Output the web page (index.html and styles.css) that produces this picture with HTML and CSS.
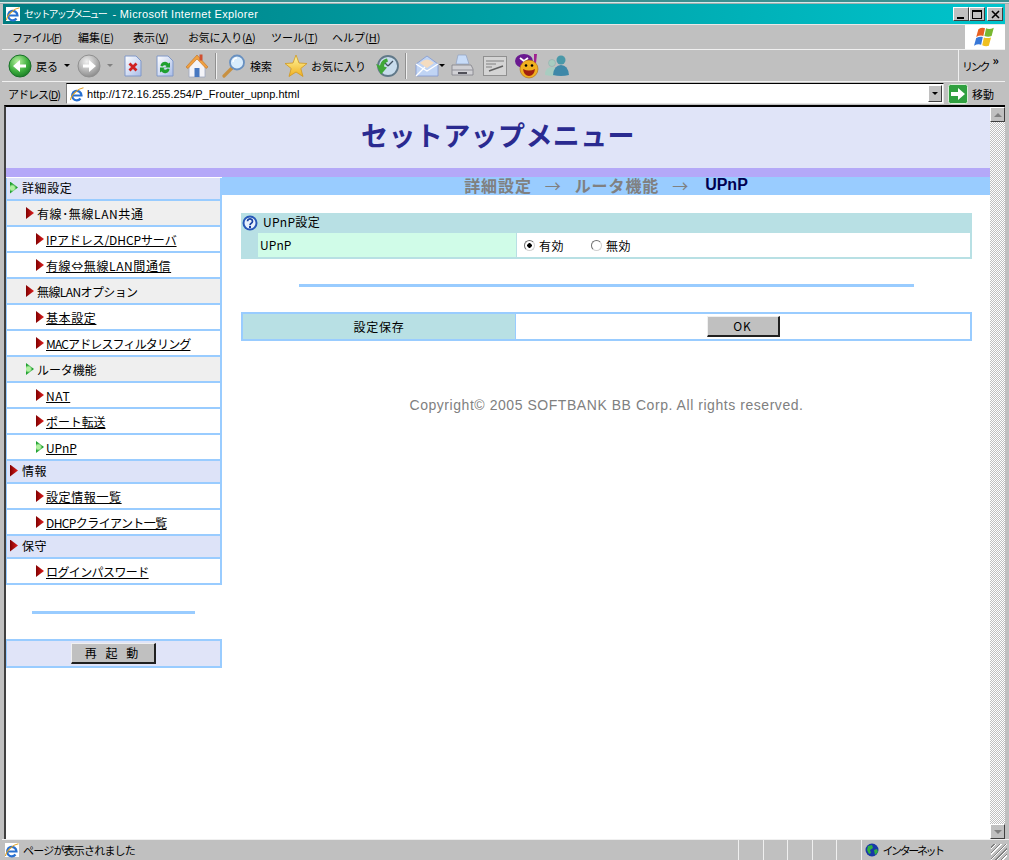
FILE: index.html
```html
<!DOCTYPE html>
<html lang="ja">
<head>
    <meta charset="UTF-8">
    <title>セットアップメニュー - Microsoft Internet Explorer</title>
    <link rel="stylesheet" href="styles.css">
</head>
<body>
<svg class="defs" width="0" height="0">
    <defs>
        <radialGradient id="green" cx="40%" cy="30%" r="80%"><stop offset="0" stop-color="#b8f0a0"/><stop offset=".55" stop-color="#40b040"/><stop offset="1" stop-color="#107020"/></radialGradient>
        <radialGradient id="grey" cx="40%" cy="30%" r="80%"><stop offset="0" stop-color="#f0f0f0"/><stop offset="1" stop-color="#808080"/></radialGradient>
        <linearGradient id="paper" x1="0" y1="0" x2="1" y2="1"><stop offset="0" stop-color="#fff"/><stop offset="1" stop-color="#a8bce8"/></linearGradient>
        <linearGradient id="gold" x1="0" y1="0" x2="0" y2="1"><stop offset="0" stop-color="#fff8a0"/><stop offset="1" stop-color="#f0b020"/></linearGradient>
        <symbol id="ie" viewBox="0 0 16 16">
            <rect x="1" y="1" width="14" height="14" fill="#fff"/>
            <path d="M3 9.500h9.500a4.700 4.700 0 1 0-1 3" fill="none" stroke="#2870d0" stroke-width="2.200"/>
            <path d="M1.500 14C2 9 9 2.500 14.500 1.800" fill="none" stroke="#e0a020" stroke-width="1.100"/>
        </symbol>
        <symbol id="globe" viewBox="0 0 14 14">
            <circle cx="7" cy="7" r="6.500" fill="#1838a8"/>
            <path d="M3 3l4-1 1 3-3 2 1 3-2 1-2-4zM9 7l3-1 1 3-3 3z" fill="#30b040"/>
        </symbol>
    </defs>
</svg>

<div class="window">
    <div class="edge"></div>

    <div class="titlebar">
        <svg class="title-icon" width="16" height="16"><use href="#ie"/></svg>
        <span class="title-text"><span class="title-ja">セットアップメニュー</span> - Microsoft Internet Explorer</span>
        <div class="caption">
            <span class="cap-btn"><i class="cap-min"></i></span>
            <span class="cap-btn"><i class="cap-max"></i></span>
            <span class="cap-btn cap-gap">
                <svg width="9" height="9"><path d="M1 1l7 7M8 1l-7 7" stroke="#000" stroke-width="1.600"/></svg>
            </span>
        </div>
    </div>

    <div class="menubar">
        <span class="menu-item m-file">ファイル(<u>F</u>)</span>
        <span class="menu-item m-edit">編集(<u>E</u>)</span>
        <span class="menu-item m-view">表示(<u>V</u>)</span>
        <span class="menu-item m-fav">お気に入り(<u>A</u>)</span>
        <span class="menu-item m-tool">ツール(<u>T</u>)</span>
        <span class="menu-item">ヘルプ(<u>H</u>)</span>
        <div class="flag-box">
            <svg width="22" height="22" viewBox="0 0 20 20">
                <path d="M4 3q3-2 6-1L8.500 9q-3-1-6.500 1z" fill="#e86020"/>
                <path d="M11 2q3 1.500 7-.5L16 9q-3 1.500-6.500 0z" fill="#78b830"/>
                <path d="M2 11q3-1.500 6-1L6.500 17q-3-1-6.500 1z" fill="#3878d8"/>
                <path d="M9 10.500q3 1 6.500 0L13.500 18q-3 1-6-.5z" fill="#f0c020"/>
            </svg>
        </div>
    </div>

    <div class="toolbar">
        <svg class="ic ic-back" width="24" height="24" viewBox="0 0 24 24">
            <circle cx="12" cy="12" r="11" fill="url(#green)" stroke="#187028"/>
            <path d="M18 10.500h-6V6l-7 6 7 6v-4.500h6z" fill="#fff"/>
        </svg>
        <span class="tb-text t-back">戻る</span>
        <i class="drop d-back"></i>
        <svg class="ic ic-fwd" width="24" height="24" viewBox="0 0 24 24">
            <circle cx="12" cy="12" r="11" fill="url(#grey)" stroke="#909090"/>
            <path d="M6 10.500h6V6l7 6-7 6v-4.500H6z" fill="#fff"/>
        </svg>
        <i class="drop drop-off d-fwd"></i>
        <svg class="ic ic-stop" width="20" height="24" viewBox="0 0 20 24">
            <path d="M2 2h11l5 5v15H2z" fill="url(#paper)" stroke="#8098c8"/>
            <path d="M6.500 9.500l7 7M13.500 9.500l-7 7" stroke="#d02020" stroke-width="2.800"/>
        </svg>
        <svg class="ic ic-refresh" width="20" height="24" viewBox="0 0 20 24">
            <path d="M2 2h11l5 5v15H2z" fill="url(#paper)" stroke="#8098c8"/>
            <path d="M5.500 12a4.500 4.500 0 0 1 8-2.500l1.500-1v5h-5l1.500-1.500a2.500 2.500 0 0 0-4 .5zM14.500 15a4.500 4.500 0 0 1-8 2.500l-1.500 1v-5h5l-1.500 1.500a2.500 2.500 0 0 0 4-.5z" fill="#20a030"/>
        </svg>
        <svg class="ic ic-home" width="24" height="26" viewBox="0 0 24 26">
            <path d="M4 12v12h16V12L12 5z" fill="#f4f4f8" stroke="#a0a8c0" stroke-width=".8"/>
            <path d="M1 14L12 2l11 12-2 1.500L12 6 3 15.500z" fill="#f0a040" stroke="#c07020" stroke-width=".6"/>
            <rect x="14.500" y="1.500" width="3" height="6" fill="#d05030"/>
            <rect x="9.500" y="15" width="5" height="9" fill="#4878c0"/>
        </svg>
        <i class="tb-sep s-1"></i>
        <svg class="ic ic-search" width="24" height="26" viewBox="0 0 24 26">
            <path d="M2 23l8-8" stroke="#c89040" stroke-width="3.200" stroke-linecap="round"/>
            <circle cx="15" cy="9.500" r="7" fill="#d8ecfc" stroke="#6890c0" stroke-width="1.800"/>
            <path d="M11 9a4 4 0 0 1 4-4" fill="none" stroke="#fff" stroke-width="1.500"/>
        </svg>
        <span class="tb-text t-search">検索</span>
        <svg class="ic ic-star" width="24" height="24" viewBox="0 0 24 24">
            <path d="M12 1l3 8 8 .5-6.200 5 2.200 8-7-4.500-7 4.500 2.200-8L1 9.500 9 9z" fill="url(#gold)" stroke="#d09820" stroke-width=".8"/>
        </svg>
        <span class="tb-text t-fav">お気に入り</span>
        <svg class="ic ic-history" width="24" height="24" viewBox="0 0 24 24">
            <circle cx="13" cy="12" r="10" fill="#c8dcec" stroke="#607888" stroke-width="1.800"/>
            <path d="M13 12l5-5M13 12l-3-3" stroke="#405060" stroke-width="1.300"/>
            <path d="M1 10l4 1.500C6 7 9 5 12 4.500l1 3c-3 1-4 3-4 5l3 1-6 7z" fill="#40a838"/>
        </svg>
        <i class="tb-sep s-2"></i>
        <svg class="ic ic-mail" width="24" height="24" viewBox="0 0 24 24">
            <path d="M1 10l11-8 11 8v12H1z" fill="#c0d4f4" stroke="#8098d0" stroke-width=".8"/>
            <path d="M5 9q7-7 14 0l-7 5z" fill="#f4dcc0"/>
            <path d="M1 22l9-9M23 10l-11 7-11-7" fill="none" stroke="#fff" stroke-width="1.300"/>
        </svg>
        <i class="drop d-mail"></i>
        <svg class="ic ic-print" width="24" height="24" viewBox="0 0 24 24">
            <path d="M8 1h8l3 9H6z" fill="#c8dcf8" stroke="#90a0c0" stroke-width=".7"/>
            <path d="M2 11h19l2 4v6H2z" fill="#d0d0d4" stroke="#808088" stroke-width=".8"/>
            <path d="M2 16h21" stroke="#909098"/>
            <rect x="8" y="18" width="9" height="2" fill="#505058"/>
        </svg>
        <svg class="ic ic-edit" width="24" height="20" viewBox="0 0 24 20">
            <rect x=".500" y=".500" width="23" height="19" fill="#d4d4d4" stroke="#909090"/>
            <path d="M3 5h18M3 8h10M3 11h6" stroke="#808080"/>
            <path d="M6 15l14-5" stroke="#606060" stroke-width="1.400"/>
        </svg>
        <svg class="ic ic-yahoo" width="25" height="26" viewBox="0 0 25 26">
            <ellipse cx="10" cy="8" rx="9" ry="7" fill="#6a1a90"/>
            <path d="M6 5l4 3 4-3M10 8v4" stroke="#fff" stroke-width="1.800" fill="none"/>
            <path d="M20 1h3l-1 9h-2z" fill="#a02090"/>
            <circle cx="15" cy="16" r="9" fill="#f0b020" stroke="#b06810" stroke-width=".6"/>
            <circle cx="12" cy="12.500" r="1.300"/><circle cx="18" cy="12.500" r="1.300"/>
            <path d="M9 16q6 3 12 0-1 7-6 7t-6-7z" fill="#a02010"/>
        </svg>
        <svg class="ic ic-msn" width="25" height="24" viewBox="0 0 25 24">
            <circle cx="7" cy="9" r="3.500" fill="#a8ccc0" stroke="#88a8a8" stroke-width=".5"/>
            <path d="M0 21q0-8 7-8 2 0 4 1l-2 8q-5 0-9-1z" fill="#a8ccc0"/>
            <circle cx="16" cy="6" r="4.500" fill="#4a98a8"/>
            <path d="M8 21q1-10 8-10t8 10q-8 2-16 0z" fill="#3f88a8"/>
        </svg>
        <div class="links">リンク<b class="chev">»</b></div>
    </div>

    <div class="addressbar">
        <span class="addr-label">アドレス(<u>D</u>)</span>
        <div class="addr-input">
            <svg width="16" height="16"><use href="#ie"/></svg>
            <span class="addr-url">http://172.16.255.254/P_Frouter_upnp.html</span>
            <span class="addr-drop"><i class="drop"></i></span>
        </div>
        <svg class="go-icon" width="20" height="20" viewBox="0 0 20 20">
            <rect x=".500" y=".500" width="19" height="19" rx="2" fill="#30a040" stroke="#d8f0d8"/>
            <path d="M3 8h7V4l7 6-7 6v-4H3z" fill="#fff"/>
        </svg>
        <span class="go-text">移動</span>
    </div>

    <div class="viewport">
        <div class="page">
            <header class="page-head">
                <h1>セットアップメニュー</h1>
            </header>
            <div class="purple"></div>
            <div class="columns">
                <nav class="side">
                    <ul class="tree">
                        <li class="row top"><i class="arrow on"></i>詳細設定</li>
                        <li class="row sub"><i class="arrow"></i>有線･無線LAN共通</li>
                        <li class="row leaf ls-0"><i class="arrow"></i><a>IPアドレス/DHCPサーバ</a></li>
                        <li class="row leaf"><i class="arrow"></i><a>有線⇔無線LAN間通信</a></li>
                        <li class="row sub ls-tight"><i class="arrow"></i>無線LANオプション</li>
                        <li class="row leaf"><i class="arrow"></i><a>基本設定</a></li>
                        <li class="row leaf ls-tighter"><i class="arrow"></i><a>MACアドレスフィルタリング</a></li>
                        <li class="row sub ls-0"><i class="arrow on"></i>ルータ機能</li>
                        <li class="row leaf"><i class="arrow"></i><a>NAT</a></li>
                        <li class="row leaf ls-0"><i class="arrow"></i><a>ポート転送</a></li>
                        <li class="row leaf ls-0"><i class="arrow on"></i><a>UPnP</a></li>
                        <li class="row top"><i class="arrow"></i>情報</li>
                        <li class="row leaf"><i class="arrow"></i><a>設定情報一覧</a></li>
                        <li class="row leaf ls-tight"><i class="arrow"></i><a>DHCPクライアント一覧</a></li>
                        <li class="row top"><i class="arrow"></i>保守</li>
                        <li class="row leaf ls-tight"><i class="arrow"></i><a>ログインパスワード</a></li>
                    </ul>
                    <div class="side-rule"></div>
                    <div class="reboot"><button class="btn btn-reboot">再 起 動</button></div>
                </nav>
                <main class="content">
                    <div class="crumbs">
                        <span>詳細設定</span><span class="to">→</span><span>ルータ機能</span><span class="to">→</span><span class="here">UPnP</span>
                    </div>
                    <div class="body">
                        <div class="panel">
                            <div class="panel-head">
                                <svg width="16" height="16" viewBox="0 0 16 16">
                                    <circle cx="8" cy="8" r="7.500" fill="#2858b8"/>
                                    <circle cx="8" cy="8" r="5.500" fill="#e8f0fc"/>
                                    <path d="M5.500 6.200a2.500 2.300 0 1 1 3.800 2c-1 .6-1.300 1-1.300 2" fill="none" stroke="#1840a0" stroke-width="1.700"/>
                                    <rect x="7" y="11" width="2" height="2" fill="#1840a0"/>
                                </svg>
                                <span class="panel-title">UPnP設定</span>
                            </div>
                            <div class="panel-row">
                                <div class="panel-label">UPnP</div>
                                <div class="panel-value">
                                    <span class="radio checked"></span><span class="radio-text">有効</span>
                                    <span class="radio"></span><span class="radio-text">無効</span>
                                </div>
                            </div>
                        </div>
                        <div class="rule"></div>
                        <div class="save">
                            <div class="save-label">設定保存</div>
                            <div class="save-value"><button class="btn btn-ok">OK</button></div>
                        </div>
                        <p class="copy">Copyright© 2005 SOFTBANK BB Corp. All rights reserved.</p>
                    </div>
                </main>
            </div>
        </div>
        <div class="scrollbar">
            <span class="sb-btn"><i class="sb-up"></i></span>
            <span class="sb-track"></span>
            <span class="sb-btn"><i class="sb-down"></i></span>
        </div>
    </div>

    <div class="statusbar">
        <svg width="16" height="16"><use href="#ie"/></svg>
        <span class="status-text">ページが表示されました</span>
        <span class="status-cell"></span>
        <span class="status-cell"></span>
        <span class="status-cell"></span>
        <span class="status-cell"></span>
        <span class="status-cell"></span>
        <div class="status-zone">
            <svg width="14" height="14"><use href="#globe"/></svg>
            <span class="zone-text">インターネット</span>
        </div>
        <span class="grip"></span>
    </div>
</div>
</body>
</html>
```

FILE: styles.css
```css
* {
    box-sizing: border-box;
}

html, body {
    margin: 0;
    height: 100%;
    overflow: hidden;
}

body {
    font-family: "Noto Sans CJK JP", "Liberation Sans", sans-serif;
    font-size: 12px;
    color: #000;
    background-color: #c0c0c0;
}

.defs {
    position: absolute;
}

.window {
    display: flex;
    flex-direction: column;
    width: 1009px;
    height: 860px;
}

.edge {
    height: 4px;
    background: linear-gradient(#3a9090 0 2px, #d8e8e8 2px 3px, #a0b0b0 3px);
}

/* title bar */
.titlebar {
    display: flex;
    align-items: center;
    height: 20px;
    margin: 0 4px 0 3px;
    padding-left: 2px;
    background: linear-gradient(90deg, #007c80, #00c4cc);
    color: #fff;
}

.title-icon {
    margin-right: 3px;
}

.title-text {
    font-family: "Liberation Sans", "Noto Sans CJK JP", sans-serif;
    font-size: 11px;
    line-height: 20px;
    letter-spacing: .35px;
    white-space: nowrap;
}

.title-ja {
    font-size: 10px;
    letter-spacing: -1.800px;
    margin-right: 3px;
}

.caption {
    display: flex;
    margin-left: auto;
    margin-right: 2px;
}

.cap-btn {
    display: flex;
    align-items: center;
    justify-content: center;
    width: 16px;
    height: 14px;
    background-color: #c0c0c0;
    border: 1px solid;
    border-color: #fff #404040 #404040 #fff;
}

.cap-gap {
    margin-left: 2px;
}

.cap-min {
    width: 7px;
    height: 2px;
    margin-top: 7px;
    margin-right: 2px;
    background-color: #000;
}

.cap-max {
    width: 10px;
    height: 9px;
    border: 1px solid #000;
    border-top-width: 2px;
}

/* menu */
.menubar {
    display: flex;
    align-items: center;
    height: 26px;
    padding-left: 10px;
    margin: 0 4px 0 2px;
    border-top: 1px solid #e8e8e8;
    border-bottom: 1px solid #f0f0f0;
    font-size: 11px;
    flex-shrink: 0;
}

.menu-item {
    white-space: nowrap;
}

.m-file { width: 66px; letter-spacing: -1.200px; }
.m-edit { width: 55px; }
.m-view { width: 55px; }
.m-fav { width: 83px; letter-spacing: -.2px; }
.m-tool { width: 61px; }

.flag-box {
    display: flex;
    align-items: center;
    justify-content: center;
    width: 40px;
    height: 24px;
    margin-left: auto;
    background-color: #fff;
}

/* toolbar, the buttons are spaced with margins from the previous one */
.toolbar {
    display: flex;
    align-items: center;
    height: 32px;
    margin: 0 4px 0 2px;
    padding-left: 6px;
    border-bottom: 1px solid #f0f0f0;
    font-size: 11px;
    flex-shrink: 0;
}

.ic {
    flex-shrink: 0;
}

.tb-text {
    white-space: nowrap;
}

.t-back { margin-left: 4px; }
.d-back { margin-left: 6px; }
.ic-fwd { margin-left: 7px; }
.d-fwd { margin-left: 6px; }
.ic-stop { margin-left: 10px; }
.ic-refresh { margin-left: 12px; }
.ic-home { margin-left: 10px; }
.s-1 { margin-left: 6px; }
.ic-search { margin-left: 5px; }
.t-search { margin-left: 4px; }
.ic-star { margin-left: 12px; }
.t-fav { margin-left: 3px; }
.ic-history { margin-left: 9px; }
.s-2 { margin-left: 6px; }
.ic-mail { margin-left: 8px; }
.ic-print { margin-left: 5px; }
.ic-edit { margin-left: 9px; }
.ic-yahoo { margin-left: 7px; }
.ic-msn { margin-left: 6px; }

.drop {
    display: inline-block;
    width: 0;
    height: 0;
    border-style: solid;
    border-width: 3px 3px 0;
    border-color: #000 transparent transparent;
}

.drop-off {
    border-top-color: #808080;
}

.tb-sep {
    width: 2px;
    height: 26px;
    border-left: 1px solid #909090;
    border-right: 1px solid #f0f0f0;
}

.links {
    display: flex;
    align-items: center;
    align-self: stretch;
    width: 47px;
    margin-left: auto;
    padding-left: 3px;
    border-left: 1px solid #f0f0f0;
    letter-spacing: -2.200px;
    white-space: nowrap;
}

.chev {
    margin: -12px 0 0 4px;
    font-size: 12px;
    line-height: 12px;
}

/* address bar */
.addressbar {
    display: flex;
    align-items: center;
    height: 23px;
    margin: 0 4px 0 2px;
    padding-left: 6px;
    font-size: 11px;
    flex-shrink: 0;
}

.addr-label {
    width: 58px;
    letter-spacing: -1px;
    white-space: nowrap;
}

.addr-input {
    display: flex;
    align-items: center;
    width: 878px;
    height: 21px;
    padding-left: 2px;
    background-color: #fff;
    border-top: 1px solid #000;
    border-left: 1px solid #808080;
    border-right: 1px solid #e8e8e8;
    border-bottom: 1px solid #e8e8e8;
}

.addr-url {
    margin-left: 2px;
    font-family: "Liberation Sans", sans-serif;
    font-size: 11px;
    letter-spacing: .05px;
}

.addr-drop {
    display: flex;
    align-items: center;
    justify-content: center;
    width: 14px;
    height: 17px;
    margin: 0 1px 0 auto;
    background-color: #c0c0c0;
    border: 1px solid;
    border-color: #fff #404040 #404040 #fff;
}

.go-icon {
    margin-left: 4px;
}

.go-text {
    margin-left: 4px;
}

/* browser viewport */
.viewport {
    display: flex;
    height: 734px;
    margin: 0 4px 0 4px;
    background-color: #fff;
    border-top: 2px solid #000;
    border-left: 2px solid #404040;
    flex-shrink: 0;
}

.page {
    flex: 1;
    min-width: 0;
}

.page-head {
    display: flex;
    align-items: center;
    justify-content: center;
    height: 61px;
    padding-bottom: 7px;
    background-color: #e0e4f8;
}

.page-head h1 {
    margin: 0;
    font-size: 27px;
    font-weight: 700;
    line-height: 1;
    letter-spacing: .4px;
    color: #2a2a90;
}

.purple {
    height: 9px;
    background-color: #b4a8f8;
}

.columns {
    display: flex;
}

/* left menu */
.side {
    width: 216px;
    flex-shrink: 0;
}

.tree {
    margin: 1px 0 0;
    padding: 0;
    list-style: none;
    border-left: 1px solid #99ccff;
    border-right: 2px solid #99ccff;
}

.row {
    display: flex;
    align-items: center;
    height: 26px;
    border-bottom: 2px solid #99ccff;
    letter-spacing: .6px;
    white-space: nowrap;
}

.row a {
    color: #000;
    text-decoration: underline;
}

.ls-0 { letter-spacing: -.1px; }
.ls-tight { letter-spacing: -.6px; }
.ls-tighter { letter-spacing: -.85px; }

.top {
    height: 23px;
    padding: 0 0 2px 3px;
    background-color: #dde3f8;
}

.top .arrow {
    margin-right: 4px;
}

.sub {
    padding-left: 19px;
    background-color: #efefef;
}

.leaf {
    padding-left: 29px;
    background-color: #fff;
}

.leaf .arrow {
    margin-right: 2px;
}

.arrow {
    width: 8px;
    height: 12px;
    margin-right: 3px;
    flex-shrink: 0;
    clip-path: polygon(0 0, 100% 50%, 0 100%);
    background: linear-gradient(90deg, #800000, #e02020);
}

.arrow.on {
    background: radial-gradient(circle at 30% 50%, #b0f0a0 0 2px, #20a030 4px);
}

.side-rule {
    height: 3px;
    margin: 26px 27px 25px 26px;
    background-color: #99ccff;
}

.reboot {
    display: flex;
    align-items: center;
    justify-content: center;
    height: 29px;
    background-color: #e0e4f8;
    border: 2px solid #99ccff;
    border-left-width: 1px;
}

.btn {
    padding: 0;
    font-family: inherit;
    font-size: 12px;
    line-height: 1;
    color: #000;
    background-color: #c0c0c0;
    border: 1px solid;
    border-color: #f0f0f0 #202020 #202020 #f0f0f0;
    border-width: 1px 2px 2px 1px;
}

.btn-reboot {
    width: 85px;
    height: 21px;
    letter-spacing: 3px;
}

.btn-ok {
    width: 73px;
    height: 21px;
    letter-spacing: 1px;
}

/* main column */
.content {
    flex: 1;
    min-width: 0;
}

.crumbs {
    display: flex;
    align-items: center;
    justify-content: center;
    height: 18px;
    padding-bottom: 2px;
    font-size: 16px;
    font-weight: 700;
    line-height: 16px;
    letter-spacing: .9px;
    color: #808080;
    background-color: #99ccff;
}

.to {
    margin: 0 13px;
    font-weight: 400;
}

.here {
    font-family: "Liberation Sans", sans-serif;
    font-size: 16px;
    letter-spacing: 0;
    color: #000050;
    margin-left: 3px;
}

.body {
    padding: 18px 18px 0 19px;
}

.panel-head {
    display: flex;
    align-items: center;
    gap: 5px;
    height: 20px;
    padding-left: 1px;
    letter-spacing: .3px;
    background-color: #b8e0e4;
}

.panel-title {
    margin-top: -3px;
}

.panel-row {
    display: flex;
    height: 26px;
    padding-left: 17px;
    background-color: #b8e0e4;
}

.panel-label {
    width: 258px;
    padding: 4px 0 0 2px;
    line-height: 16px;
    letter-spacing: .1px;
    background-color: #d0fce8;
    border-bottom: 2px solid #b8e0e4;
}

.panel-value {
    display: flex;
    align-items: center;
    flex: 1;
    margin-left: 1px;
    padding-left: 7px;
    background-color: #fff;
    border-right: 2px solid #b8e0e4;
    border-bottom: 2px solid #b8e0e4;
}

.radio {
    width: 11px;
    height: 11px;
    border-radius: 50%;
    background-color: #fff;
    border: 1px solid #707070;
    border-right-color: #d0d0d0;
    border-bottom-color: #d0d0d0;
}

.radio.checked {
    background: radial-gradient(circle, #000 0 2px, #fff 2.500px);
}

.radio-text {
    margin: 0 27px 0 4px;
    letter-spacing: .5px;
}

.rule {
    height: 3px;
    margin: 25px 58px 25px 58px;
    background-color: #99ccff;
}

.save {
    display: flex;
    height: 29px;
    border: 2px solid #99ccff;
}

.save-label {
    display: flex;
    align-items: center;
    justify-content: center;
    width: 273px;
    letter-spacing: .7px;
    background-color: #b8e0e4;
    border-right: 1px solid #99ccff;
}

.save-value {
    display: flex;
    align-items: center;
    justify-content: center;
    flex: 1;
}

.copy {
    margin: 55px 0 0;
    font-family: "Liberation Sans", sans-serif;
    font-size: 14px;
    line-height: 18px;
    letter-spacing: .55px;
    text-align: center;
    color: #808080;
}

/* scrollbar */
.scrollbar {
    display: flex;
    flex-direction: column;
    width: 15px;
    flex-shrink: 0;
}

.sb-btn {
    display: flex;
    align-items: center;
    justify-content: center;
    height: 15px;
    background-color: #c0c0c0;
    border: 1px solid;
    border-color: #fff #404040 #404040 #fff;
}

.sb-track {
    flex: 1;
    background: repeating-conic-gradient(#c0c0c0 0 25%, #fff 0 50%) 0 0 / 2px 2px;
}

.sb-up, .sb-down {
    width: 0;
    height: 0;
    border-style: solid;
    border-color: transparent;
}

.sb-up {
    border-width: 0 4px 4px;
    border-bottom-color: #808080;
}

.sb-down {
    border-width: 4px 4px 0;
    border-top-color: #808080;
}

/* status bar */
.statusbar {
    display: flex;
    align-items: center;
    flex: 1;
    margin-left: 2px;
    padding-left: 2px;
    border-top: 1px solid #f0f0f0;
    font-size: 11px;
}

.status-text {
    width: 715px;
    margin-left: 3px;
    letter-spacing: -.8px;
}

.status-cell {
    align-self: stretch;
    width: 24.500px;
    border-left: 1px solid #f0f0f0;
}

.status-zone {
    display: flex;
    align-items: center;
    gap: 4px;
    align-self: stretch;
    width: 130px;
    padding-left: 3px;
    border-left: 1px solid #f0f0f0;
}

.zone-text {
    letter-spacing: -2.400px;
}

.grip {
    width: 16px;
    height: 16px;
    align-self: flex-end;
    background: repeating-linear-gradient(135deg, #c0c0c0 0 2px, #808080 2px 3px, #fff 3px 4px);
}
```
